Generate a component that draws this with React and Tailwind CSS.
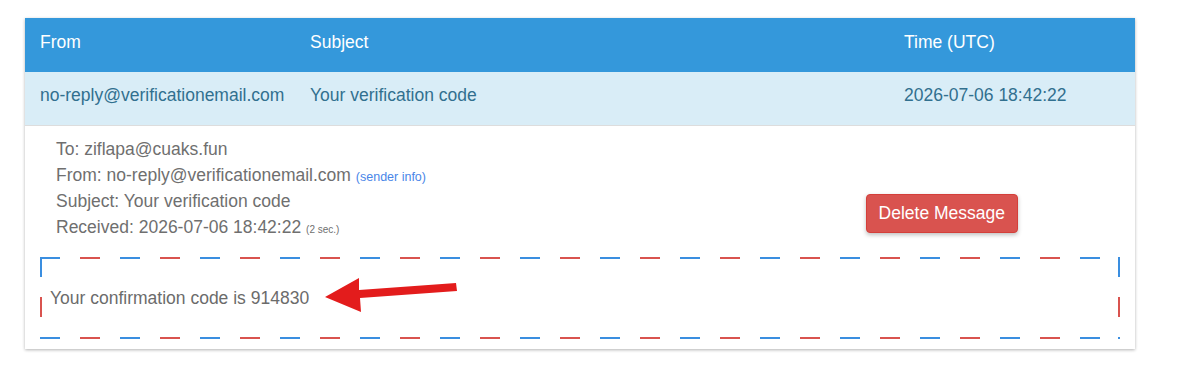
import React from 'react';

const airmail = {
    backgroundImage: [
        'repeating-linear-gradient(90deg,#3a8ee0 0 20px,transparent 20px 40px,#d9534f 40px 60px,transparent 60px 80px)',
        'repeating-linear-gradient(90deg,#3a8ee0 0 20px,transparent 20px 40px,#d9534f 40px 60px,transparent 60px 80px)',
        'repeating-linear-gradient(180deg,#3a8ee0 0 20px,transparent 20px 40px,#d9534f 40px 60px,transparent 60px 80px)',
        'repeating-linear-gradient(180deg,#3a8ee0 0 20px,transparent 20px 40px,#d9534f 40px 60px,transparent 60px 80px)',
    ].join(','),
};

const Arrow = () => (
    <svg className="absolute left-[280px] top-[15px]" width="145" height="45" viewBox="0 0 145 45">
        <polygon points="5,25 39,6 39,18 136,11 137,19 40,26 41,40" fill="#e31c1c" />
    </svg>
);

export default function App() {
    return (
        <div className="pt-[18px] pl-[25px] pb-[10px] font-['Liberation_Sans',Arial,sans-serif]">
            <div className="w-[1110px] bg-white shadow-[0_1px_3px_rgba(0,0,0,0.3)]">
                {/* Header */}
                <div className="grid grid-cols-[270px_594px_1fr] h-[54px] items-center px-[15px] pb-[6px] bg-[#3498db] text-white text-[17.5px]">
                    <div>From</div>
                    <div>Subject</div>
                    <div>Time (UTC)</div>
                </div>

                {/* Row */}
                <div className="grid grid-cols-[270px_594px_1fr] h-[54px] items-center px-[15px] pb-[6px] bg-[#d9edf7] text-[#31708f] text-[17.5px] border-b border-[#dddddd]">
                    <div>no-reply@verificationemail.com</div>
                    <div>Your verification code</div>
                    <div>2026-07-06 18:42:22</div>
                </div>

                {/* Body */}
                <div className="px-[15px] pt-[10px] pb-[10px]">
                    <div className="flex justify-between h-[104px]">
                        <div className="pl-[16px] text-[17.5px] leading-[26px] text-[#6f6f6f]">
                            <div>To: ziflapa@cuaks.fun</div>
                            <div>
                                From: no-reply@verificationemail.com{' '}
                                <span className="text-[12.5px] leading-none text-[#4a86e8]">(sender info)</span>
                            </div>
                            <div>Subject: Your verification code</div>
                            <div>
                                Received: 2026-07-06 18:42:22{' '}
                                <span className="text-[10px] leading-none">(2 sec.)</span>
                            </div>
                        </div>
                        <button className="self-start mt-[58px] mr-[102px] h-[39px] px-[12px] rounded-[4px] bg-[#d9534f] border border-[#d43f3a] text-white text-[17.5px] shadow-[0_2px_4px_rgba(0,0,0,0.25)]">
                            Delete Message
                        </button>
                    </div>

                    <div
                        className="relative mt-[17px] h-[82px] flex items-center pl-[10px] bg-no-repeat [background-size:100%_2px,100%_2px,2px_100%,2px_100%] [background-position:0_0,0_100%,0_0,100%_0]"
                        style={airmail}
                    >
                        <div className="text-[17.5px] text-[#6b6b6b]">Your confirmation code is 914830</div>
                        <Arrow />
                    </div>
                </div>
            </div>
        </div>
    );
}
